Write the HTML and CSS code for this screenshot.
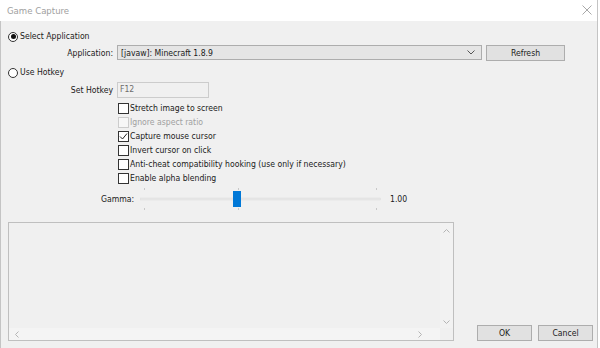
FILE: index.html
```html
<!DOCTYPE html>
<html lang="en">
<head>
  <meta charset="UTF-8">
  <title>Game Capture</title>
  <link rel="stylesheet" href="styles.css">
</head>
<body>
  <div class="window">
    <div class="titlebar">
      <span class="title">Game Capture</span>
      <svg class="close" width="10" height="10" viewBox="0 0 10 10">
        <path d="M0.5 0.5 L9.5 9.5 M9.5 0.5 L0.5 9.5" stroke="#a8a8a8" stroke-width="1" fill="none"/>
      </svg>
    </div>

    <div class="client">
      <div class="radio-row first">
        <span class="radio checked"></span>
        <span>Select Application</span>
      </div>

      <div class="field-row app-row">
        <label class="field-label">Application:</label>
        <div class="combo">
          <span>[javaw]: Minecraft 1.8.9</span>
          <svg width="8" height="5" viewBox="0 0 8 5"><path d="M0.5 0.5 L4 4 L7.5 0.5" stroke="#555" fill="none"/></svg>
        </div>
        <button class="btn refresh">Refresh</button>
      </div>

      <div class="radio-row hotkey-radio">
        <span class="radio"></span>
        <span>Use Hotkey</span>
      </div>

      <div class="field-row hotkey-row">
        <label class="field-label">Set Hotkey</label>
        <div class="hotkey-box">F12</div>
      </div>

      <div class="checks">
        <div class="check-row"><span class="box"></span>Stretch image to screen</div>
        <div class="check-row disabled"><span class="box"></span>Ignore aspect ratio</div>
        <div class="check-row"><span class="box"><svg width="9" height="9" viewBox="0 0 9 9"><path d="M1 4.5 L3.5 7 L8 1.5" stroke="#222" fill="none"/></svg></span>Capture mouse cursor</div>
        <div class="check-row"><span class="box"></span>Invert cursor on click</div>
        <div class="check-row"><span class="box"></span>Anti-cheat compatibility hooking (use only if necessary)</div>
        <div class="check-row"><span class="box"></span>Enable alpha blending</div>
      </div>

      <div class="gamma-row">
        <span class="gamma-label">Gamma:</span>
        <svg class="slider" width="244" height="22" viewBox="0 0 244 22">
          <rect x="0.5" y="10" width="240" height="2" fill="#e7e7e7" stroke="#dcdcdc" stroke-width="0.5"/>
          <path d="M4.5 0 V2 M98.5 0 V2 M236.5 0 V2 M4.5 20 V22 M98.5 20 V22 M236.5 20 V22" stroke="#c8c8c8"/>
          <rect x="93" y="3" width="8" height="16" fill="#0078d7"/>
        </svg>
        <span class="gamma-value">1.00</span>
      </div>

      <div class="bottom">
        <div class="listbox">
          <div class="list-main">
            <div class="list-area"></div>
            <div class="vscroll">
              <svg width="7" height="4" viewBox="0 0 7 4"><path d="M0.5 3.5 L3.5 0.5 L6.5 3.5" stroke="#b4b4b4" fill="none"/></svg>
              <svg width="7" height="4" viewBox="0 0 7 4"><path d="M0.5 0.5 L3.5 3.5 L6.5 0.5" stroke="#b4b4b4" fill="none"/></svg>
            </div>
          </div>
          <div class="hscroll">
            <svg width="4" height="7" viewBox="0 0 4 7"><path d="M3.5 0.5 L0.5 3.5 L3.5 6.5" stroke="#b4b4b4" fill="none"/></svg>
            <svg width="4" height="7" viewBox="0 0 4 7"><path d="M0.5 0.5 L3.5 3.5 L0.5 6.5" stroke="#b4b4b4" fill="none"/></svg>
          </div>
        </div>
        <div class="dialog-buttons">
          <button class="btn ok">OK</button>
          <button class="btn cancel">Cancel</button>
        </div>
      </div>
    </div>
  </div>
</body>
</html>
```

FILE: styles.css
```css
body {
  margin: 0;
  width: 600px;
  height: 348px;
  background: #ffffff;
  font-family: "Liberation Sans Narrow", "DejaVu Sans Condensed", "Liberation Sans", sans-serif;
  font-size: 8.6px;
  color: #1a1a1a;
  overflow: hidden;
}

.window {
  width: 597px;
  height: 348px;
  border-right: 1px solid #c4c4c4;
  display: flex;
  flex-direction: column;
}

.titlebar {
  height: 21px;
  display: flex;
  align-items: center;
  justify-content: space-between;
  padding: 0 7px 1px 7px;
  box-sizing: border-box;
  background: #ffffff;
}

.title {
  color: #a0a0a0;
  font-size: 9.5px;
}

.close {
  margin-right: -2px;
}

.client {
  flex: 1;
  background: #f0f0f0;
  border-left: 1px solid #c4c4c4;
  padding: 0 0 0 7px;
}

/* radio rows */
.radio-row {
  display: flex;
  align-items: center;
  height: 11px;
  line-height: 11px;
  gap: 2px;
}
.radio-row.first {
  margin-top: 10px;
}
.radio-row.hotkey-radio {
  margin-top: 6px;
}
.radio {
  width: 10px;
  height: 10px;
  box-sizing: border-box;
  border: 1px solid #333;
  border-radius: 50%;
  background: #ffffff;
  display: flex;
  align-items: center;
  justify-content: center;
}
.radio.checked::after {
  content: "";
  width: 5px;
  height: 5px;
  border-radius: 50%;
  background: #111;
}

/* label + control rows */
.field-row {
  display: flex;
  align-items: center;
  height: 16px;
}
.app-row {
  margin-top: 3px;
}
.hotkey-row {
  margin-top: 4px;
}
.field-label {
  width: 105px;
  text-align: right;
  margin-right: 4px;
}

.combo {
  width: 365px;
  height: 15px;
  box-sizing: border-box;
  border: 1px solid #adadad;
  background: #e5e5e5;
  display: flex;
  align-items: center;
  justify-content: space-between;
  padding: 0 6px 0 3px;
  align-self: flex-start;
}

.btn {
  font: inherit;
  color: #1a1a1a;
  background: #e1e1e1;
  border: 1px solid #adadad;
  padding: 0;
  height: 16px;
  box-sizing: border-box;
}
.refresh {
  width: 79px;
  margin-left: 4px;
}

.hotkey-box {
  width: 92px;
  height: 16px;
  box-sizing: border-box;
  border: 1px solid #cccccc;
  background: #f0f0f0;
  color: #6d6d6d;
  padding-left: 2px;
  line-height: 12px;
}

/* checkboxes */
.checks {
  margin-top: 5px;
  padding-left: 110px;
}
.check-row {
  display: flex;
  align-items: flex-start;
  height: 14px;
  line-height: 11px;
}
.box {
  width: 11px;
  height: 11px;
  box-sizing: border-box;
  border: 1px solid #333;
  background: #ffffff;
  margin-right: 1px;
  display: flex;
  align-items: center;
  justify-content: center;
}
.check-row.disabled {
  color: #a0a0a0;
}
.check-row.disabled .box {
  border-color: #cccccc;
  background: #f7f7f7;
}

/* gamma slider */
.gamma-row {
  display: flex;
  align-items: center;
  margin-top: 1px;
  height: 22px;
}
.gamma-label {
  width: 39px;
  padding-left: 93px;
}
.slider {
  display: block;
}
.gamma-value {
  margin-left: 6px;
}

/* log area + dialog buttons */
.bottom {
  display: flex;
  align-items: flex-end;
  margin-top: 12px;
}
.listbox {
  width: 446px;
  height: 119px;
  box-sizing: border-box;
  border: 1px solid #bfbfbf;
  display: flex;
  flex-direction: column;
}
.list-main {
  flex: 1;
  display: flex;
}
.list-area {
  flex: 1;
}
.vscroll {
  width: 13px;
  display: flex;
  flex-direction: column;
  justify-content: space-between;
  align-items: center;
  padding: 6px 0 4px;
  background: #f2f2f2;
}
.hscroll {
  height: 12px;
  margin-right: 13px;
  display: flex;
  justify-content: space-between;
  align-items: center;
  padding: 0 18px 0 6px;
  background: #f4f4f4;
}

.dialog-buttons {
  display: flex;
  gap: 6px;
  margin-left: 23px;
}
.ok,
.cancel {
  width: 55px;
  height: 16px;
}
```
